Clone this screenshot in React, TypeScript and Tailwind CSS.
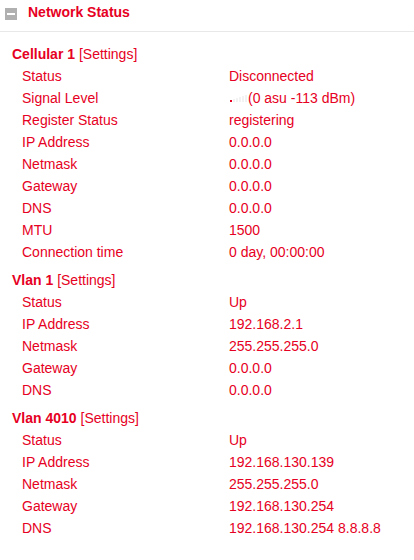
const sections = [
  {
    name: 'Cellular 1',
    rows: [
      ['Status', 'Disconnected'],
      ['Signal Level', '(0 asu -113 dBm)'],
      ['Register Status', 'registering'],
      ['IP Address', '0.0.0.0'],
      ['Netmask', '0.0.0.0'],
      ['Gateway', '0.0.0.0'],
      ['DNS', '0.0.0.0'],
      ['MTU', '1500'],
      ['Connection time', '0 day, 00:00:00'],
    ],
  },
  {
    name: 'Vlan 1',
    rows: [
      ['Status', 'Up'],
      ['IP Address', '192.168.2.1'],
      ['Netmask', '255.255.255.0'],
      ['Gateway', '0.0.0.0'],
      ['DNS', '0.0.0.0'],
    ],
  },
  {
    name: 'Vlan 4010',
    rows: [
      ['Status', 'Up'],
      ['IP Address', '192.168.130.139'],
      ['Netmask', '255.255.255.0'],
      ['Gateway', '192.168.130.254'],
      ['DNS', '192.168.130.254 8.8.8.8'],
    ],
  },
]

function SignalBars() {
  return (
    <svg className="mt-[6px] block" width="19" height="9" viewBox="0 0 19 9">
      <rect x="1" y="7" width="2" height="2" fill="#e60023" />
      <rect x="4" y="6" width="2" height="3" fill="#f2f2f2" />
      <rect x="7" y="5" width="2" height="4" fill="#f2f2f2" />
      <rect x="10" y="4" width="2" height="5" fill="#f2f2f2" />
      <rect x="13" y="3" width="2" height="6" fill="#f2f2f2" />
      <rect x="16" y="2" width="2" height="7" fill="#f2f2f2" />
    </svg>
  )
}

export default function App() {
  return (
    <div className="h-[560px] w-[414px] overflow-hidden bg-white text-[14px] leading-[22px] text-[#e60023] [font-family:'Liberation_Sans',Arial,sans-serif]">
      <div className="flex h-[32px] items-start border-b border-[#e8e8e8] pl-[5px] pt-[1px]">
        <div className="mt-[7px] flex h-[12px] w-[12px] items-center justify-center bg-[#b0b0b0]">
          <div className="h-[2px] w-[8px] bg-white" />
        </div>
        <div className="ml-[11px] font-bold">Network Status</div>
      </div>
      <div className="pt-[11px]">
        {sections.map((s) => (
          <div key={s.name} className="mb-[6px]">
            <div className="pl-[12px]">
              <span className="font-bold">{s.name}</span> [Settings]
            </div>
            {s.rows.map(([label, value]) => (
              <div key={label} className="flex">
                <div className="w-[229px] pl-[22px]">{label}</div>
                {label === 'Signal Level' && <SignalBars />}
                <div>{value}</div>
              </div>
            ))}
          </div>
        ))}
      </div>
    </div>
  )
}
